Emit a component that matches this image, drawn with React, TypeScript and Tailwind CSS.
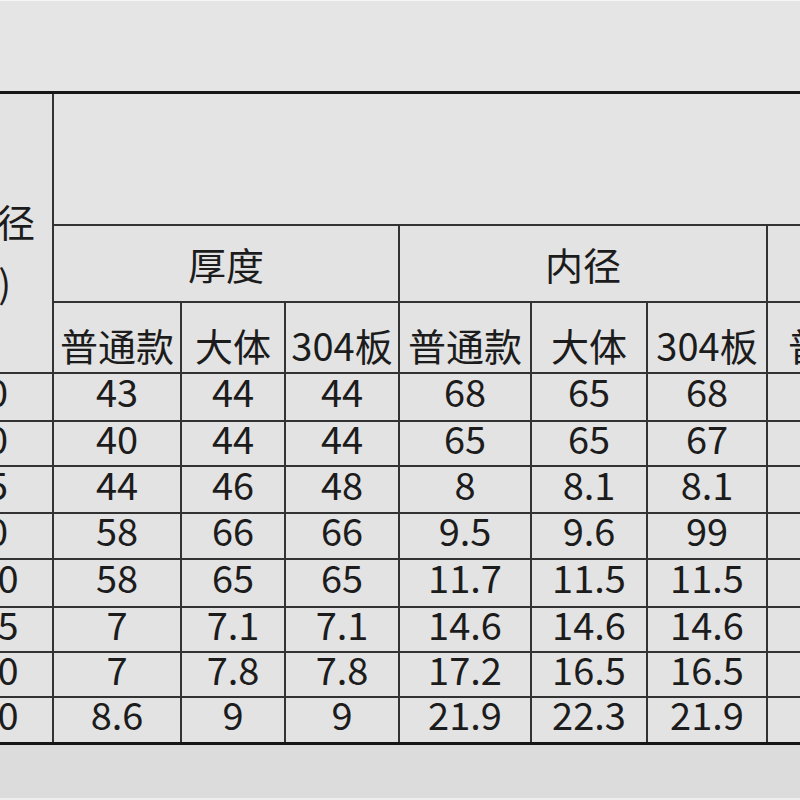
import React from "react";

const thick = [
  ["43", "44", "44", "68", "65", "68"],
  ["40", "44", "44", "65", "65", "67"],
  ["44", "46", "48", "8", "8.1", "8.1"],
  ["58", "66", "66", "9.5", "9.6", "99"],
  ["58", "65", "65", "11.7", "11.5", "11.5"],
  ["7", "7.1", "7.1", "14.6", "14.6", "14.6"],
  ["7", "7.8", "7.8", "17.2", "16.5", "16.5"],
  ["8.6", "9", "9", "21.9", "22.3", "21.9"],
];
const left = ["20", "30", "35", "40", "100", "125", "150", "200"];
const extra = [
  ["12", "13", "13"],
  ["13", "14", "14"],
  ["16", "17", "17"],
  ["20", "21", "21"],
  ["24", "25", "25"],
  ["28", "29", "29"],
  ["30", "31", "31"],
  ["37", "39", "39"],
];
const subs = ["普通款", "大体", "304板", "普通款", "大体", "304板", "普通款", "大体", "304板"];

export default function App() {
  return (
    <div className="w-[800px] h-[800px] overflow-hidden bg-[#e5e5e5] border-t border-[#f6f6f6] font-['Noto_Sans_CJK_SC',sans-serif] text-[#1c1c1c] flex flex-col">
      <div className="h-[90px] shrink-0" />
      <div className="ml-[-78px] w-max shrink-0 grid grid-cols-[130px_126px_102px_112px_130px_114px_118px_154px_102px_112px] grid-rows-[130px_75px_69px_46px_43px_45px_44px_46px_43px_43px_44px] gap-[2px] bg-[#333333] border-y-[3px] border-[#161616]">
        <div className="row-span-3 bg-[#e3e3e3] flex flex-col items-center justify-center pt-[35px] text-[38px] whitespace-nowrap">
          <div className="leading-[61px] mr-[18px] whitespace-nowrap">管外径</div>
          <div className="leading-[61px] mr-[8px] whitespace-nowrap">(Φ)</div>
        </div>
        <div className="col-span-9 bg-[#e4e4e4]" />
        <div className="col-span-3 bg-[#e3e3e3] flex items-center justify-center text-[38px] leading-[38px]">厚度</div>
        <div className="col-span-3 bg-[#e3e3e3] flex items-center justify-center text-[38px] leading-[38px]">内径</div>
        <div className="col-span-3 bg-[#e3e3e3] flex items-center justify-center text-[38px] leading-[38px]">外径</div>
        {subs.map((s, i) => (
          <div key={"s" + i} className="bg-[#e3e3e3] flex items-center justify-center pt-[14px] text-[38px] leading-[38px] whitespace-nowrap">
            {s}
          </div>
        ))}
        {thick.map((r, ri) => (
          <React.Fragment key={"r" + ri}>
            <div className="bg-[#e3e3e3] flex items-center justify-center pb-[12px] text-[38px] leading-[30px]">{left[ri]}</div>
            {[...r, ...extra[ri]].map((v, ci) => (
              <div key={ci} className="bg-[#e3e3e3] flex items-center justify-center pb-[12px] text-[38px] leading-[30px] whitespace-nowrap">
                {ci < 6 ? v : ""}
              </div>
            ))}
          </React.Fragment>
        ))}
      </div>
      <div className="flex-1 bg-[#dcdcdc] border-b-2 border-[#eeeeee]" />
    </div>
  );
}
